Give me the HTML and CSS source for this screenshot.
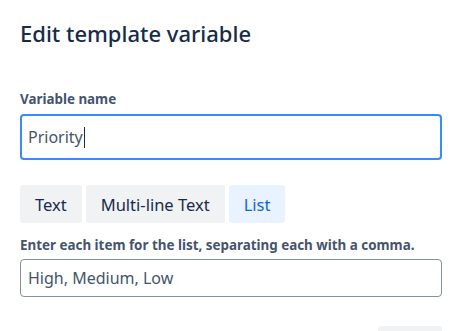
FILE: index.html
```html
<!DOCTYPE html>
<html lang="en">
<head>
<meta charset="utf-8">
<title>Edit template variable</title>
<link rel="stylesheet" href="styles.css">
</head>
<body>
<div class="modal">
  <h1 class="title">Edit template variable</h1>
  <div class="field field-name">
    <label class="label">Variable name</label>
    <div class="input input-focus"><span class="value">Priority</span><span class="caret"></span></div>
  </div>
  <div class="types">
    <button class="type">Text</button>
    <button class="type">Multi-line Text</button>
    <button class="type type-active">List</button>
  </div>
  <div class="field field-list">
    <label class="label">Enter each item for the list, separating each with a comma.</label>
    <div class="input input-plain"><span class="value">High, Medium, Low</span></div>
  </div>
  <div class="footer">
    <button class="footer-btn"></button>
  </div>
</div>
</body>
</html>
```
FILE: styles.css
```css
* { box-sizing: border-box; }
html, body { margin: 0; background: #fff; }
body {
  font-family: "Noto Sans", "Open Sans", sans-serif;
  color: #172B4D;
  overflow: hidden;
}
.modal {
  padding: 19px 21px 0 20px;
  display: flex;
  flex-direction: column;
}
.title {
  margin: 0;
  font-size: 22px;
  line-height: 28px;
  font-weight: 500;
  color: #172B4D;
}
.field { display: flex; flex-direction: column; }
.label {
  font-size: 13.4px;
  font-weight: 700;
  line-height: 16px;
  color: #44546F;
}
.field-name .label { margin-top: 44px; margin-bottom: 7px; }
.field-list .label { margin-top: 14px; margin-bottom: 6px; }
.input {
  display: flex;
  align-items: center;
  border-radius: 4px;
  font-size: 16px;
  color: #44546F;
}
.input-focus {
  height: 46px;
  border: 2px solid #388BFF;
  padding-left: 6px;
}
.caret {
  width: 1px;
  height: 21px;
  background: #172B4D;
  margin-left: 1px;
}
.input-plain {
  height: 38px;
  border: 1px solid #8590A2;
  padding-left: 7px;
}
.types {
  display: flex;
  gap: 4px;
  margin-top: 25px;
}
.type {
  font-family: inherit;
  font-size: 16.5px;
  height: 38px;
  padding: 0 15px;
  border: 0;
  border-radius: 3px;
  background: #F1F2F4;
  color: #172B4D;
}
.type-active { background: #E9F2FF; color: #0C66E4; }
.footer {
  display: flex;
  justify-content: flex-end;
  margin-top: 29px;
}
.footer-btn {
  width: 64px;
  height: 32px;
  border: 0;
  border-radius: 3px;
  background: #F1F2F4;
}
```
